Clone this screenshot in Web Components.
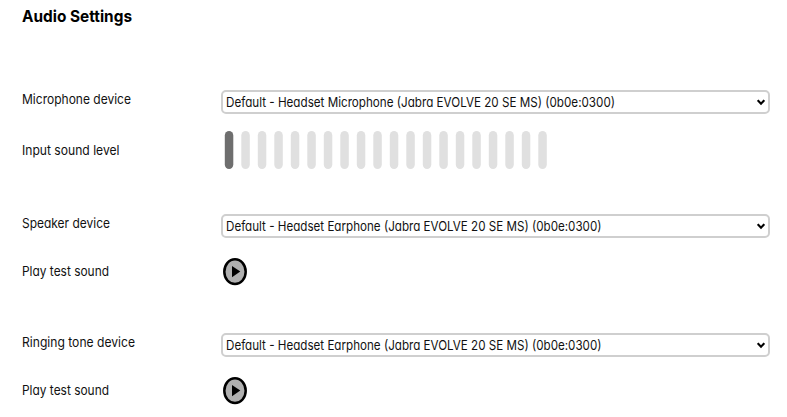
<!DOCTYPE html>
<html lang="en">
<head>
<meta charset="utf-8">
<title>Audio Settings</title>
<style>
  body {
    margin: 0;
    background: #fff;
    color: #111;
    font-family: Inter, "Open Sans", sans-serif;
  }
</style>
</head>
<body>
<audio-settings></audio-settings>

<script>
// Single line of text condensed to a given width
class FitText extends HTMLElement {
  constructor() {
    super();
    this.attachShadow({mode: 'open'});
  }

  connectedCallback() {
    const width = this.getAttribute('width');
    const size = this.getAttribute('size') || 13.5;
    const weight = this.getAttribute('weight') || 400;

    this.shadowRoot.innerHTML = `
      <style>
        :host { display: block; height: 20px; }
        svg { display: block; overflow: visible; }
        text {
          fill: currentColor;
          font-size: ${size}px;
          font-weight: ${weight};
          font-feature-settings: "cv11";
        }
      </style>
      <svg width="${width}" height="20">
        <text x="0" y="15" textLength="${width}" lengthAdjust="spacingAndGlyphs"></text>
      </svg>
    `;
    this.shadowRoot.querySelector('text').textContent = this.getAttribute('text');
  }
}

// Label on the left, control in the slot
class SettingRow extends HTMLElement {
  constructor() {
    super();
    this.attachShadow({mode: 'open'});
  }

  connectedCallback() {
    this.shadowRoot.innerHTML = `
      <style>
        :host {
          display: grid;
          grid-template-columns: 199px 549px;
          align-items: start;
        }
        .label { margin-top: var(--label-top, 0); }
      </style>
      <div class="label">
        <fit-text text="${this.getAttribute('label')}" width="${this.getAttribute('label-width')}"></fit-text>
      </div>
      <slot></slot>
    `;
  }
}

class DeviceSelect extends HTMLElement {
  constructor() {
    super();
    this.attachShadow({mode: 'open'});
    this.shadowRoot.innerHTML = `
      <style>
        :host {
          display: flex;
          box-sizing: border-box;
          height: 24px;
          padding: 0 3px 0 2.5px;
          justify-content: space-between;
          border: 2px solid #cfcfcf;
          border-radius: 5px;
          background: #fff;
        }
        svg { display: block; margin-top: 7px; }
      </style>
      <slot></slot>
      <svg width="8" height="7" viewBox="0 0 8 7">
        <path d="M0.7 1.1 L4 4.7 L7.3 1.1" fill="none" stroke="#000" stroke-width="2.1"/>
      </svg>
    `;
  }
}

class LevelMeter extends HTMLElement {
  constructor() {
    super();
    this.attachShadow({mode: 'open'});
  }

  connectedCallback() {
    const level = Number(this.getAttribute('level'));
    const bars = Number(this.getAttribute('bars'));
    const step = 16.5;
    let barsHTML = '';
    for (let i = 0; i < bars; i++) {
      const fill = i < level ? '#6e6e6e' : '#e0e0e0';
      barsHTML += `<rect x="${i * step + 3.8}" y="0" width="8.5" height="38" rx="4.25" ry="4.6" fill="${fill}"/>`;
    }

    this.shadowRoot.innerHTML = `
      <style>
        :host { display: block; }
        svg { display: block; }
      </style>
      <svg width="${bars * step + 4}" height="38">${barsHTML}</svg>
    `;
  }
}

class PlayButton extends HTMLElement {
  constructor() {
    super();
    this.attachShadow({mode: 'open'});
    this.shadowRoot.innerHTML = `
      <style>
        :host { display: block; padding-left: 2px; }
        button {
          display: block;
          padding: 0;
          border: 0;
          background: none;
          cursor: pointer;
        }
        svg { display: block; }
      </style>
      <button aria-label="Play">
        <svg width="24" height="28" viewBox="0 0 24 28">
          <ellipse cx="12" cy="13.7" rx="10.7" ry="12.4" fill="#b0b0b0" stroke="#000" stroke-width="2.5"/>
          <path d="M9 7.9 L17.3 13.6 L9 19.3 Z" fill="#000"/>
        </svg>
      </button>
    `;
  }
}

class AudioSettings extends HTMLElement {
  constructor() {
    super();
    this.attachShadow({mode: 'open'});
    this.shadowRoot.innerHTML = `
      <style>
        :host {
          display: block;
          box-sizing: border-box;
          height: 417px;
          padding: 7px 17px 0 22px;
          overflow: hidden;
        }
        h1 { margin: 0 0 63px; color: #000; }
        .device { height: 41px; --label-top: -1px; }
        .meter { height: 83px; --label-top: 9px; }
        .output { height: 44px; }
        .play { height: 75px; --label-top: 3px; }
      </style>
      <h1><fit-text text="Audio Settings" width="110" size="16.5" weight="700"></fit-text></h1>
      <setting-row class="device" label="Microphone device" label-width="109">
        <device-select><fit-text text="Default - Headset Microphone (Jabra EVOLVE 20 SE MS) (0b0e:0300)" width="389"></fit-text></device-select>
      </setting-row>
      <setting-row class="meter" label="Input sound level" label-width="97.5">
        <level-meter level="1" bars="20"></level-meter>
      </setting-row>
      <setting-row class="device output" label="Speaker device" label-width="88">
        <device-select><fit-text text="Default - Headset Earphone (Jabra EVOLVE 20 SE MS) (0b0e:0300)" width="375.5"></fit-text></device-select>
      </setting-row>
      <setting-row class="play" label="Play test sound" label-width="87">
        <play-button></play-button>
      </setting-row>
      <setting-row class="device output" label="Ringing tone device" label-width="113">
        <device-select><fit-text text="Default - Headset Earphone (Jabra EVOLVE 20 SE MS) (0b0e:0300)" width="375.5"></fit-text></device-select>
      </setting-row>
      <setting-row class="play" label="Play test sound" label-width="87">
        <play-button></play-button>
      </setting-row>
    `;
  }
}

customElements.define('fit-text', FitText);
customElements.define('setting-row', SettingRow);
customElements.define('device-select', DeviceSelect);
customElements.define('level-meter', LevelMeter);
customElements.define('play-button', PlayButton);
customElements.define('audio-settings', AudioSettings);
</script>
</body>
</html>
